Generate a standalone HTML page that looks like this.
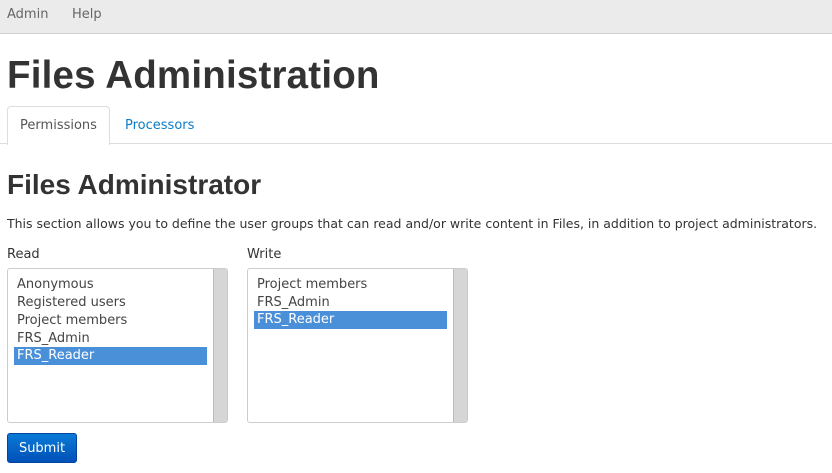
<!DOCTYPE html>
<html><head><style>
body{margin:0;width:832px;height:473px;background:#fff;font-family:"DejaVu Sans",sans-serif;color:#333;overflow:hidden;position:relative}
.nav{position:absolute;left:0;top:0;width:832px;height:33px;background:#ebebeb;border-bottom:1px solid #d0d0d0}
.nav span{position:absolute;top:7px;font-size:13px;color:#666}
h1{position:absolute;left:7px;top:54px;margin:0;font:bold 38.5px "Liberation Sans",sans-serif;color:#333;letter-spacing:0.2px}
.tabline{position:absolute;left:0;top:143px;width:832px;border-top:1px solid #ddd}
.tab{position:absolute;left:7px;top:106px;width:101px;height:38px;border:1px solid #ddd;border-bottom:none;border-radius:4px 4px 0 0;background:#fff;font-size:13px;text-align:center;line-height:38px;color:#555}
.tab2{position:absolute;left:125px;top:118px;font-size:13px;color:#0a7bc8}
h2{position:absolute;left:7px;top:169px;margin:0;font:bold 28px "Liberation Sans",sans-serif;color:#333}
p{position:absolute;left:7px;top:216px;margin:0;font-size:12.5px;white-space:nowrap}
.lbl{position:absolute;top:247px;font-size:13px}
.sel{position:absolute;top:268px;width:221px;height:155px;border:1px solid #ccc;border-radius:3px;box-sizing:border-box;overflow:hidden}
.sb{position:absolute;right:0;top:0;width:13px;height:100%;background:#d6d6d6;border-left:1px solid #bbb}
.o{position:absolute;left:6px;width:193px;height:18px;line-height:18px;font-size:13px;padding-left:3px;box-sizing:border-box;color:#444}
.o.s{background:#4a90d9;color:#fff}
.btn{position:absolute;left:7px;top:433px;width:70px;height:30px;border-radius:3px;background:linear-gradient(#0a7bd6,#0050b8);border:1px solid #0045a0;box-sizing:border-box;color:#fff;font-size:13px;text-align:center;line-height:29px}
</style></head><body>
<div class="nav"><span style="left:7px">Admin</span><span style="left:72px">Help</span></div>
<h1>Files Administration</h1>
<div class="tabline"></div>
<div class="tab">Permissions</div>
<div class="tab2">Processors</div>
<h2>Files Administrator</h2>
<p>This section allows you to define the user groups that can read and/or write content in Files, in addition to project administrators.</p>
<div class="lbl" style="left:7px">Read</div>
<div class="lbl" style="left:247px">Write</div>
<div class="sel" style="left:7px">
<div class="o" style="top:7px">Anonymous</div>
<div class="o" style="top:25px">Registered users</div>
<div class="o" style="top:43px">Project members</div>
<div class="o" style="top:61px">FRS_Admin</div>
<div class="o s" style="top:78px">FRS_Reader</div>
<div class="sb"></div></div>
<div class="sel" style="left:247px">
<div class="o" style="top:7px">Project members</div>
<div class="o" style="top:25px">FRS_Admin</div>
<div class="o s" style="top:42px">FRS_Reader</div>
<div class="sb"></div></div>
<div class="btn">Submit</div>
</body></html>
